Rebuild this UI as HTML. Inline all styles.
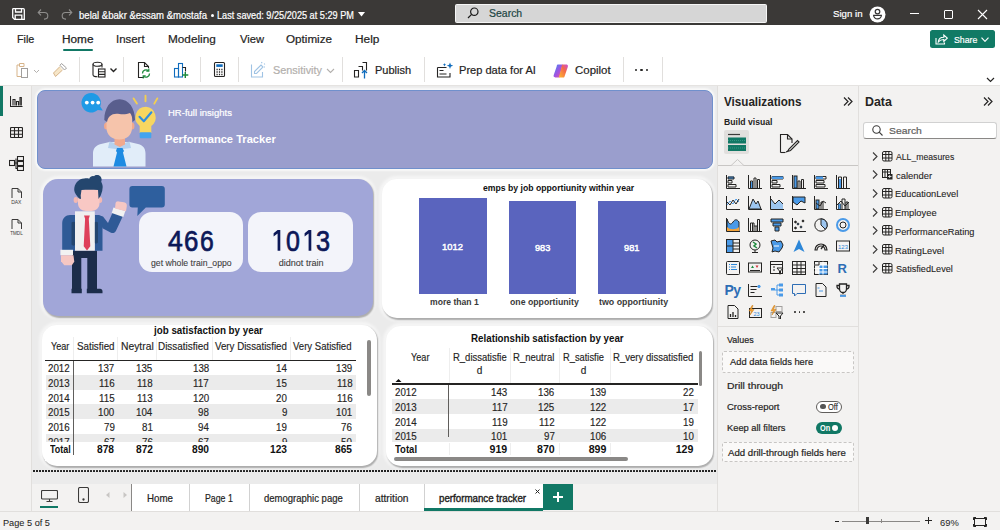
<!DOCTYPE html>
<html><head><meta charset="utf-8"><style>
*{box-sizing:border-box;margin:0;padding:0}
html,body{width:1000px;height:530px;overflow:hidden;background:#f3f2f1;font-family:"Liberation Sans",sans-serif;color:#252423;position:relative}
.abs{position:absolute}
svg{display:block;position:absolute}
.sep{position:absolute;top:57px;width:1px;height:25px;background:#e1dfdd}
</style></head><body>
<div class="abs" style="left:0;top:0;width:1000px;height:26px;background:#3b3937;border-bottom:1.2px solid #222"></div>
<svg style="left:12px;top:8px" width="13" height="12" viewBox="0 0 13 12" fill="none" stroke="#fff" stroke-width="1.3"><path d="M1 .7h10.3a1 1 0 0 1 1 1v9.6H2.5L.7 9.5V1.7a1 1 0 0 1 .3-1z"/><path d="M3.5 .7v3.3h6V.7M3.2 11.3V7.2h6.6v4.1"/></svg>
<svg style="left:37px;top:8px" width="12" height="12" viewBox="0 0 12 12" fill="none" stroke="#8f8e8c" stroke-width="1.1"><path d="M1.5 4.5h6a3.3 3.3 0 0 1 0 6.6H7"/><path d="M4 1.5L1.2 4.5 4 7.3"/></svg>
<svg style="left:61px;top:8px" width="12" height="12" viewBox="0 0 12 12" fill="none" stroke="#8f8e8c" stroke-width="1.1"><path d="M10.5 4.5h-6a3.3 3.3 0 0 0 0 6.6H5"/><path d="M8 1.5l2.8 3L8 7.3"/></svg>
<div class="abs" style="left:79.38px;top:10.79px;font-size:10.06px;line-height:10.06px;color:#fff;white-space:nowrap;transform:scaleX(0.9512);transform-origin:0 0;-webkit-text-stroke:0.20px #fff;">belal &amp;bakr &amp;essam &amp;mostafa</div>
<div class="abs" style="left:211px;top:14px;width:3px;height:3px;border-radius:50%;background:#fff"></div>
<div class="abs" style="left:216.77px;top:10.79px;font-size:10.06px;line-height:10.06px;color:#fff;white-space:nowrap;transform:scaleX(0.9111);transform-origin:0 0;-webkit-text-stroke:0.20px #fff;">Last saved: 9/25/2025 at 5:29 PM</div>
<svg style="left:358px;top:12px" width="7" height="5" viewBox="0 0 7 5"><path d="M0 0h7L3.5 4.5z" fill="#fff"/></svg>
<div class="abs" style="left:455px;top:3.7px;width:312px;height:19.5px;background:#d6d6d6;border:1px solid #f6f6f6;border-radius:1.5px"></div>
<svg style="left:467px;top:7px" width="12" height="12" viewBox="0 0 12 12" fill="none" stroke="#1b1b1b" stroke-width="1.2"><circle cx="7.3" cy="4.7" r="3.7"/><path d="M4.6 7.4L1 11"/></svg>
<div class="abs" style="left:489.03px;top:8.93px;font-size:10.47px;line-height:10.47px;color:#214544;white-space:nowrap;-webkit-text-stroke:0.20px #214544;">Search</div>
<div class="abs" style="left:833.06px;top:9.02px;font-size:9.78px;line-height:9.78px;color:#fff;white-space:nowrap;transform:scaleX(0.9899);transform-origin:0 0;-webkit-text-stroke:0.20px #fff;">Sign in</div>
<svg style="left:869px;top:5.5px" width="17" height="17" viewBox="0 0 17 17"><circle cx="8.5" cy="8.5" r="8" fill="#fff"/><circle cx="8.5" cy="5.6" r="2.3" fill="none" stroke="#343332" stroke-width="1.2"/><path d="M4.6 9.3h7.8a3.9 3.6 0 0 1-7.8 0z" fill="none" stroke="#343332" stroke-width="1.2"/></svg>
<div class="abs" style="left:910px;top:13px;width:9px;height:1.2px;background:#fff"></div>
<div class="abs" style="left:944px;top:10px;width:8.5px;height:8.5px;border:1.2px solid #fff;border-radius:1px"></div>
<svg style="left:977px;top:9px" width="11" height="11" viewBox="0 0 11 11" stroke="#fff" stroke-width="1.1"><path d="M1 1l9 9M10 1l-9 9"/></svg>
<div class="abs" style="left:0;top:25px;width:1000px;height:61px;background:#fff;border-bottom:1px solid #e5e3e1"></div>
<div class="abs" style="left:17.14px;top:34.31px;font-size:10.61px;line-height:10.61px;color:#252423;white-space:nowrap;transform:scaleX(1.0151);transform-origin:0 0;-webkit-text-stroke:0.20px #252423;">File</div>
<div class="abs" style="left:62.06px;top:34.31px;font-size:10.61px;line-height:10.61px;color:#252423;white-space:nowrap;transform:scaleX(1.1127);transform-origin:0 0;-webkit-text-stroke:0.25px #252423;">Home</div>
<div class="abs" style="left:115.97px;top:34.31px;font-size:10.61px;line-height:10.61px;color:#252423;white-space:nowrap;transform:scaleX(1.0773);transform-origin:0 0;-webkit-text-stroke:0.20px #252423;">Insert</div>
<div class="abs" style="left:168.06px;top:34.31px;font-size:10.61px;line-height:10.61px;color:#252423;white-space:nowrap;transform:scaleX(1.1084);transform-origin:0 0;-webkit-text-stroke:0.20px #252423;">Modeling</div>
<div class="abs" style="left:239.94px;top:34.31px;font-size:10.61px;line-height:10.61px;color:#252423;white-space:nowrap;transform:scaleX(1.0541);transform-origin:0 0;-webkit-text-stroke:0.20px #252423;">View</div>
<div class="abs" style="left:286.47px;top:34.31px;font-size:10.61px;line-height:10.61px;color:#252423;white-space:nowrap;transform:scaleX(1.0997);transform-origin:0 0;-webkit-text-stroke:0.20px #252423;">Optimize</div>
<div class="abs" style="left:355.05px;top:34.31px;font-size:10.61px;line-height:10.61px;color:#252423;white-space:nowrap;transform:scaleX(1.1198);transform-origin:0 0;-webkit-text-stroke:0.20px #252423;">Help</div>
<div class="abs" style="left:63px;top:48.5px;width:30px;height:2px;background:#117865;border-radius:1px"></div>
<div class="abs" style="left:930px;top:30px;width:65px;height:18px;background:#117a65;border-radius:2.5px"></div>
<svg style="left:934.5px;top:32.5px" width="13" height="12" viewBox="0 0 13 12" fill="none" stroke="#fff" stroke-width="1.1"><path d="M1 5v6h8.5V9.5"/><path d="M3.3 9c.2-3 2.5-4.8 5.5-4.8V2l3.5 3.2-3.5 3.2V6.5C6 6.5 4.5 7.5 3.3 9z"/></svg>
<div class="abs" style="left:954.21px;top:35.14px;font-size:9.64px;line-height:9.64px;color:#fff;white-space:nowrap;transform:scaleX(0.9067);transform-origin:0 0;-webkit-text-stroke:0.2px #fff;">Share</div>
<svg style="left:981px;top:36.5px" width="8" height="5.5" viewBox="0 0 8 5.5" fill="none" stroke="#fff" stroke-width="1.2"><path d="M.5 .7l3.5 3.6L7.5 .7"/></svg>
<div class="sep" style="left:79px"></div>
<div class="sep" style="left:123px"></div>
<div class="sep" style="left:162px"></div>
<div class="sep" style="left:200px"></div>
<div class="sep" style="left:238px"></div>
<div class="sep" style="left:342px"></div>
<div class="sep" style="left:424px"></div>
<div class="sep" style="left:623px"></div>
<div class="sep" style="left:662px"></div>
<svg style="left:15px;top:62px" width="26" height="17" viewBox="0 0 26 17" fill="none" stroke-width="1"><path d="M4.5 3H2v11.5h4" stroke="#d7b48a"/><path d="M4.5 1.5h4.5v3H4.5z" stroke="#d7b48a"/><rect x="6.5" y="6.5" width="6" height="9" stroke="#a19f9d"/><path d="M19 8l2.5 2.5L24 8" stroke="#b3b0ad"/></svg>
<svg style="left:52px;top:62px" width="16" height="16" viewBox="0 0 16 16" fill="none" stroke-width="1"><path d="M9.5 1.5l5 4.5-2 2-4.5-4.7z" stroke="#a19f9d"/><path d="M8 4.5L1.5 11l2 3.5L10.5 8" stroke="#d7b48a" fill="#f6e6c8"/></svg>
<svg style="left:91px;top:61px" width="28" height="18" viewBox="0 0 28 18" fill="none" stroke="#252423" stroke-width="1.1"><ellipse cx="6.5" cy="3.3" rx="4.5" ry="2"/><path d="M2 3.3v10.5c0 1.1 2 2 4.5 2M11 3.3v3.2"/><rect x="7.5" y="8" width="6.5" height="8"/><path d="M7.5 10.8h6.5M7.5 13.4h6.5"/><path d="M19.5 7.5l3 3 3-3" stroke-width="1.4"/></svg>
<svg style="left:136px;top:61px" width="16" height="18" viewBox="0 0 16 18" fill="none" stroke-width="1.1"><path d="M8 16.5H2.5v-15h6l4 4V7" stroke="#252423"/><path d="M8.5 1.5v4h4" stroke="#252423"/><path d="M6.5 12.5a3.5 3.5 0 0 1 6-2.6M13.5 12.5a3.5 3.5 0 0 1-6 2.6" stroke="#1c8a3c" stroke-width="1.3"/><path d="M12.8 7.6v2.5h-2.5M7.2 17.4v-2.5h2.5" stroke="#1c8a3c" stroke-width="1.2"/></svg>
<svg style="left:173px;top:61px" width="17" height="18" viewBox="0 0 17 18" fill="none" stroke-width="1.1"><rect x="1.5" y="7.5" width="4" height="8.5" stroke="#0f6cbd"/><rect x="5.5" y="2.5" width="4" height="13.5" stroke="#0f6cbd"/><path d="M9.5 6.5h3v4" stroke="#252423"/><path d="M12.3 11v6M9.3 14h6" stroke="#1c8a3c" stroke-width="1.4"/></svg>
<svg style="left:213px;top:61px" width="13" height="17" viewBox="0 0 13 17" fill="none" stroke="#252423" stroke-width="1.1"><rect x="1.5" y="1.5" width="10" height="14" rx="1"/><rect x="3.3" y="3.3" width="6.4" height="2.6" fill="#0f6cbd" stroke="none"/><path d="M3.5 8.5h1.2M5.9 8.5h1.2M8.3 8.5h1.2M3.5 11h1.2M5.9 11h1.2M8.3 11h1.2M3.5 13.5h1.2M5.9 13.5h1.2M8.3 13.5h1.2" stroke-width="1.4"/></svg>
<svg style="left:250px;top:61px" width="16" height="18" viewBox="0 0 16 18" fill="none" stroke="#9fc3e4" stroke-width="1.1"><path d="M1.5 3.5v12.5h11v-5"/><path d="M4.5 10.5l6.5-6.5 2 2-6.5 6.5h-2z"/><path d="M11.5 1l.5 1.2M14.2 2.5l.6 1M15 6h-1"/></svg>
<div class="abs" style="left:272.51px;top:64.91px;font-size:10.61px;line-height:10.61px;color:#b3b0ad;white-space:nowrap;transform:scaleX(1.0256);transform-origin:0 0;-webkit-text-stroke:0.20px #b3b0ad;">Sensitivity</div>
<svg style="left:326px;top:68px" width="9" height="6" viewBox="0 0 9 6" fill="none" stroke="#b3b0ad" stroke-width="1.1"><path d="M1 1l3.5 3.5L8 1"/></svg>
<svg style="left:353px;top:61px" width="17" height="18" viewBox="0 0 17 18" fill="none" stroke-width="1.1"><path d="M1.5 9.5h4v6.5h-4zM5.5 5.5h4v4M9.5 1.5h4v8" stroke="#252423"/><path d="M11.5 17.5V9.5M9 12l2.5-2.5L14 12" stroke="#0f6cbd" stroke-width="1.3"/></svg>
<div class="abs" style="left:375.12px;top:64.91px;font-size:10.61px;line-height:10.61px;color:#252423;white-space:nowrap;transform:scaleX(1.0368);transform-origin:0 0;-webkit-text-stroke:0.20px #252423;">Publish</div>
<svg style="left:436px;top:62px" width="18" height="17" viewBox="0 0 18 17" fill="none" stroke-width="1.1"><path d="M1.5 5.5h9M1.5 5.5v9.5h12.5v-4" stroke="#252423"/><path d="M3.5 8.5h4M3.5 12h7" stroke="#252423"/><path d="M14 .5l.9 2.3 2.3.9-2.3.9L14 7l-.9-2.4-2.3-.9 2.3-.9z" fill="#0f6cbd"/><path d="M8.5 1l.5 1.2 1.2.5-1.2.5-.5 1.2-.5-1.2-1.2-.5 1.2-.5z" fill="#0f6cbd"/></svg>
<div class="abs" style="left:458.61px;top:65.11px;font-size:10.61px;line-height:10.61px;color:#252423;white-space:nowrap;transform:scaleX(1.0429);transform-origin:0 0;-webkit-text-stroke:0.20px #252423;">Prep data for AI</div>
<svg style="left:552.5px;top:63.5px" width="15.5" height="14" viewBox="0 0 17 15"><defs><linearGradient id="cg1" x1="0" y1="0" x2="1" y2="1"><stop offset="0" stop-color="#3c8cf5"/><stop offset=".55" stop-color="#a452e0"/><stop offset="1" stop-color="#f45b8a"/></linearGradient><linearGradient id="cg2" x1="0" y1="1" x2="1" y2="0"><stop offset="0" stop-color="#ffb92e"/><stop offset=".6" stop-color="#f3684b"/><stop offset="1" stop-color="#c94edb"/></linearGradient></defs><path d="M5 .5h5.5L7 14.5H2.5C1 14.5.3 13.5.8 12L4 2.5c.3-1.2.6-2 1-2z" fill="url(#cg1)"/><path d="M12 14.5H6.5L10 .5h4.5c1.5 0 2.2 1 1.7 2.5L13 12.5c-.3 1.2-.6 2-1 2z" fill="url(#cg2)"/></svg>
<div class="abs" style="left:574.93px;top:65.11px;font-size:10.61px;line-height:10.61px;color:#252423;white-space:nowrap;transform:scaleX(1.0793);transform-origin:0 0;-webkit-text-stroke:0.20px #252423;">Copilot</div>
<div class="abs" style="left:634.5px;top:69px;width:2.4px;height:2.4px;border-radius:50%;background:#252423"></div>
<div class="abs" style="left:640.3px;top:69px;width:2.4px;height:2.4px;border-radius:50%;background:#252423"></div>
<div class="abs" style="left:646.1px;top:69px;width:2.4px;height:2.4px;border-radius:50%;background:#252423"></div>
<svg style="left:986px;top:77px" width="9" height="6" viewBox="0 0 9 6" fill="none" stroke="#252423" stroke-width="1.2"><path d="M1 1l3.5 3.5L8 1"/></svg>
<div class="abs" style="left:0;top:86px;width:32px;height:425px;background:#f3f2f1;border-right:1px solid #e1dfdd"></div>
<div class="abs" style="left:32px;top:86px;width:685px;height:398px;background:#ebebeb"></div>
<div class="abs" style="left:717px;top:86px;width:142px;height:425px;background:#f3f2f1;border-left:1px solid #e1dfdd;border-right:1px solid #e1dfdd"></div>
<div class="abs" style="left:859px;top:86px;width:141px;height:425px;background:#f3f2f1"></div>
<div class="abs" style="left:0;top:511px;width:1000px;height:19px;background:#f3f2f1;border-top:1px solid #e1dfdd"></div>
<div class="abs" style="left:33px;top:470.3px;width:684px;height:1.8px;background:repeating-linear-gradient(90deg,#222 0 1.6px,transparent 1.6px 3px)"></div>
<div class="abs" style="left:37px;top:90px;width:675.5px;height:79px;background:#9a9ecd;border:1.5px solid #7090cc;border-radius:8px;box-shadow:0 0 2px 2px rgba(255,255,255,0.7)"></div>
<svg style="left:80px;top:90px" width="80" height="80" viewBox="80 90 80 80">
<path d="M91.3 93a9.8 9.8 0 1 0 6.5 17.1l5 .5-2.6-4.2A9.8 9.8 0 0 0 91.3 93z" fill="#1f9ae6"/>
<circle cx="86.8" cy="102.6" r="1.9" fill="#fff"/><circle cx="92.6" cy="102.6" r="1.9" fill="#fff"/><circle cx="98.2" cy="102.6" r="1.9" fill="#fff"/>
<path d="M93 166.5v-13c0-5 3-8.5 8-9.5l8.5-2h20l8.5 2c5 1 7.5 4.5 7.5 9.5v13z" fill="#e1edf9"/>
<path d="M109.5 141.5l10 3 10-3 1.5 6.5-11.5 1.5-11.5-1.5z" fill="#b5d1ee"/>
<path d="M114.5 137h10.5v7.5l-5.2 2.5-5.3-2.5z" fill="#f1a98d"/>
<path d="M117 148h5.5l1.5 3-1 1.5 3.5 14h-13l3.5-14-1-1.5z" fill="#1e8be2"/>
<ellipse cx="106.5" cy="126" rx="2.5" ry="3.5" fill="#f1a98d"/><ellipse cx="132" cy="126" rx="2.5" ry="3.5" fill="#f1a98d"/>
<path d="M106.5 114c0-3 3-4 13-4s12.5 1 12.5 4v14c0 7-5.5 11.5-12.7 11.5S106.5 135 106.5 128z" fill="#f6c4ab"/>
<path d="M104.3 120c0-12 6-20.7 15.2-20.7s15.5 8.7 15.5 20.7l-2.5 2c0-4-1-7.5-2.5-9-3 1.5-8 1.5-10.5 1-3.5-.5-7-.5-10 2.5-1.5 1.5-2 3.5-2.5 5.5z" fill="#595e8d"/>
<path d="M133.6 98.4l3.3 5.2M145.5 95.8v5.5M157.3 98.4l-3 5.2" stroke="#f3cf4f" stroke-width="1.9" stroke-linecap="round"/>
<path d="M146 106.8a10.6 10.6 0 0 0-6.3 19.1v7h11.6v-7A10.6 10.6 0 0 0 146 106.8z" fill="#f7d660"/>
<rect x="139.7" y="132.3" width="11.6" height="6" rx="1" fill="#44a4ee"/>
<path d="M139.5 116.8l4.3 4.5 7.6-9" fill="none" stroke="#2f8ee0" stroke-width="2.1" stroke-linecap="round" stroke-linejoin="round"/>
</svg>
<div class="abs" style="left:168.24px;top:108.70px;font-size:9.22px;line-height:9.22px;color:#fff;white-space:nowrap;transform:scaleX(1.0307);transform-origin:0 0;-webkit-text-stroke:0.20px #fff;">HR-full insights</div>
<div class="abs" style="left:165.08px;top:133.37px;font-size:11.73px;line-height:11.73px;font-weight:bold;color:#fff;white-space:nowrap;transform:scaleX(0.9500);transform-origin:0 0;">Performance Tracker</div>
<div class="abs" style="left:43px;top:179px;width:330px;height:137px;background:#a1a6d8;border-radius:15px;box-shadow:1px 1.5px 1.5px rgba(0,0,0,0.30),0 0 3px 3px rgba(255,255,255,0.55)"></div>
<svg style="left:55px;top:175px" width="115" height="125" viewBox="55 175 115 125">
<path d="M129.4 189a3 3 0 0 1 3-3h29.4a3 3 0 0 1 3 3v15.4a3 3 0 0 1-3 3h-16l-8.5 8.5.5-8.5h-5.4a3 3 0 0 1-3-3z" fill="#2e5f9e"/>
<path d="M72 250.5h25v39H87.3V258h-6v31.5H72z" fill="#1c2d4a"/>
<path d="M71.5 288.8h10.3v4.4H71.5zM86.8 288.8h13.2c1.5 0 2.5 1 2.5 2.5v1.9H86.8z" fill="#1c2d4a"/>
<path d="M98 215l5 1.5 5 6.5 5.5-12.5 10 4.2-7.5 16c-1 2-3 2.8-5 2l-8.5-4.5z" fill="#2f5a96"/>
<path d="M62.2 223c0-4.5 3.5-8 8-8H75v35.7H62.2z" fill="#2f5a96"/>
<path d="M94.8 215h3c2.5 0 4.7 2.2 4.7 5v30.7h-7.7z" fill="#2f5a96"/>
<path d="M71.5 222.5c1.5-1 3-1 4 0v22c-1 1.5-3 1.5-4 0zM94 222.5c1.3-1 2.8-1 4 0v20c-1.2 1.5-2.8 1.5-4 0z" fill="#24466f"/>
<path d="M75 211.3h19.8v39.4H75z" fill="#f0f0f0"/>
<path d="M84 215.5h5.8l-1 3.3 1.5 27.5-3.3 4.2-3.3-4.2 1.4-27.5z" fill="#de405a"/>
<rect x="60.4" y="249.8" width="12.6" height="5.4" fill="#f2f2f2"/>
<path d="M61 255.2h12.5l.8 6.5-2.5 3.5h-7.5l-3.3-4z" fill="#f6c7c3"/>
<path d="M113.5 207.5l11.8 3.6-2 5.8-11.6-3.8z" fill="#f2f2f2"/>
<path d="M115 208.5l.5-5c.2-1.5 1.5-2.3 3-2.1l5.5.8c2 .3 3.2 2 2.8 4l-.8 5z" fill="#f6c7c3"/>
<ellipse cx="75.8" cy="200" rx="2.2" ry="3" fill="#f3b8b2"/><ellipse cx="100" cy="200" rx="2.2" ry="3" fill="#f3b8b2"/>
<path d="M78 189h21.5v14.5c0 4.5-4 7.5-8 7.5h-5.5c-4.5 0-8-3-8-7.5z" fill="#f8c8c4"/>
<path d="M74.2 190c0-6.5 4-11 10-11.5 2-.3 3.5-.3 5 .2.8-2 2.8-3 4.8-2.5 1.2-1.5 3.5-1.8 5.2-.8 2.3 1.3 3 4 2 6.3.8 1.5 1.5 3.2 1.5 5.3l-.5 4-1.5 4.5-2.2 3.5-.5-9c-5.5-.5-12-.5-16.5 0l-.8 5.5.3 3.5-2-.5c-2.5-3-4.5-5.5-4.8-8.5z" fill="#24466e"/>
</svg>
<div class="abs" style="left:138.5px;top:212px;width:104.5px;height:60px;background:#f3f4fa;border-radius:13px"></div>
<div class="abs" style="left:248px;top:212px;width:104.5px;height:60px;background:#f3f4fa;border-radius:13px"></div>
<div class="abs" style="left:168.47px;top:226.63px;font-size:28.91px;line-height:28.91px;color:#0c1858;white-space:nowrap;transform:scaleX(0.9178);transform-origin:0 0;-webkit-text-stroke:0.70px #0c1858;">4</div>
<div class="abs" style="left:183.91px;top:226.63px;font-size:28.91px;line-height:28.91px;color:#0c1858;white-space:nowrap;transform:scaleX(0.8926);transform-origin:0 0;-webkit-text-stroke:0.70px #0c1858;">6</div>
<div class="abs" style="left:199.76px;top:226.63px;font-size:28.91px;line-height:28.91px;color:#0c1858;white-space:nowrap;transform:scaleX(0.8554);transform-origin:0 0;-webkit-text-stroke:0.70px #0c1858;">6</div>
<svg style="left:273.0px;top:230px" width="8" height="21" viewBox="0 0 8 21"><path d="M4.6 .1h2.7v20.7H4.6V3.4L.6 6.4V3.3z" fill="#0c1858"/></svg>
<div class="abs" style="left:285.90px;top:226.63px;font-size:28.91px;line-height:28.91px;color:#0c1858;white-space:nowrap;transform:scaleX(0.8647);transform-origin:0 0;-webkit-text-stroke:0.70px #0c1858;">0</div>
<svg style="left:303.6px;top:230px" width="8" height="21" viewBox="0 0 8 21"><path d="M4.6 .1h2.7v20.7H4.6V3.4L.6 6.4V3.3z" fill="#0c1858"/></svg>
<div class="abs" style="left:316.49px;top:226.63px;font-size:28.91px;line-height:28.91px;color:#0c1858;white-space:nowrap;transform:scaleX(0.8738);transform-origin:0 0;-webkit-text-stroke:0.70px #0c1858;">3</div>
<div class="abs" style="left:150.65px;top:258.92px;font-size:9.08px;line-height:9.08px;color:#404040;white-space:nowrap;transform:scaleX(0.9573);transform-origin:0 0;-webkit-text-stroke:0.10px #404040;">get whole train_oppo</div>
<div class="abs" style="left:278.64px;top:258.92px;font-size:9.08px;line-height:9.08px;color:#404040;white-space:nowrap;-webkit-text-stroke:0.10px #404040;">didnot train</div>
<div class="abs" style="left:382px;top:179px;width:330px;height:139px;background:#ffffff;border-radius:15px;box-shadow:1px 1.5px 1.5px rgba(0,0,0,0.30),0 0 3px 3px rgba(255,255,255,0.55)"></div>
<div class="abs" style="left:483.45px;top:183.70px;font-size:9.22px;line-height:9.22px;font-weight:bold;color:#111;white-space:nowrap;transform:scaleX(0.9401);transform-origin:0 0;">emps by job opportiunity within year</div>
<div class="abs" style="left:418.8px;top:198.0px;width:67.9px;height:95.6px;background:#5a64be"></div>
<div class="abs" style="left:442.20px;top:241.56px;font-size:9.50px;line-height:9.50px;color:#fff;white-space:nowrap;transform:scaleX(0.9872);transform-origin:0 0;-webkit-text-stroke:0.45px #fff;">1012</div>
<div class="abs" style="left:430.14px;top:297.26px;font-size:9.50px;line-height:9.50px;font-weight:bold;color:#3a3a3a;white-space:nowrap;transform:scaleX(0.9066);transform-origin:0 0;">more than 1</div>
<div class="abs" style="left:508.6px;top:201.2px;width:67.7px;height:92.4px;background:#5a64be"></div>
<div class="abs" style="left:534.78px;top:243.16px;font-size:9.50px;line-height:9.50px;color:#fff;white-space:nowrap;transform:scaleX(0.9675);transform-origin:0 0;-webkit-text-stroke:0.45px #fff;">983</div>
<div class="abs" style="left:509.65px;top:297.26px;font-size:9.50px;line-height:9.50px;font-weight:bold;color:#3a3a3a;white-space:nowrap;transform:scaleX(0.9173);transform-origin:0 0;">one opportiunity</div>
<div class="abs" style="left:598.0px;top:201.2px;width:67.7px;height:92.4px;background:#5a64be"></div>
<div class="abs" style="left:624.18px;top:243.16px;font-size:9.50px;line-height:9.50px;color:#fff;white-space:nowrap;transform:scaleX(0.9705);transform-origin:0 0;-webkit-text-stroke:0.45px #fff;">981</div>
<div class="abs" style="left:599.31px;top:297.26px;font-size:9.50px;line-height:9.50px;font-weight:bold;color:#3a3a3a;white-space:nowrap;transform:scaleX(0.9297);transform-origin:0 0;">two opportiunity</div>
<div class="abs" style="left:42.3px;top:325.2px;width:335px;height:140.5px;background:#ffffff;border-radius:15px;box-shadow:1px 1.5px 1.5px rgba(0,0,0,0.30),0 0 3px 3px rgba(255,255,255,0.55)"></div>
<div class="abs" style="left:154.15px;top:325.63px;font-size:10.47px;line-height:10.47px;font-weight:bold;color:#111;white-space:nowrap;transform:scaleX(0.9362);transform-origin:0 0;">job satisfaction by year</div>
<div class="abs" style="left:45.5px;top:374.9px;width:310px;height:14.8px;background:#ebebeb"></div>
<div class="abs" style="left:45.5px;top:404.3px;width:310px;height:14.8px;background:#ebebeb"></div>
<div class="abs" style="left:45.5px;top:433.7px;width:310px;height:14.8px;background:#ebebeb"></div>
<div class="abs" style="left:73.3px;top:337px;width:1px;height:23px;background:#eeeeee"></div>
<div class="abs" style="left:117.2px;top:337px;width:1px;height:23px;background:#eeeeee"></div>
<div class="abs" style="left:155.5px;top:337px;width:1px;height:23px;background:#eeeeee"></div>
<div class="abs" style="left:212.0px;top:337px;width:1px;height:23px;background:#eeeeee"></div>
<div class="abs" style="left:289.5px;top:337px;width:1px;height:23px;background:#eeeeee"></div>
<div class="abs" style="left:50.77px;top:342.09px;font-size:10.06px;line-height:10.06px;color:#252423;white-space:nowrap;transform:scaleX(0.9040);transform-origin:0 0;-webkit-text-stroke:0.15px #252423;">Year</div>
<div class="abs" style="left:77.06px;top:342.09px;font-size:10.06px;line-height:10.06px;color:#252423;white-space:nowrap;transform:scaleX(0.9744);transform-origin:0 0;-webkit-text-stroke:0.15px #252423;">Satisfied</div>
<div class="abs" style="left:120.57px;top:342.09px;font-size:10.06px;line-height:10.06px;color:#252423;white-space:nowrap;transform:scaleX(1.0274);transform-origin:0 0;-webkit-text-stroke:0.15px #252423;">Neytral</div>
<div class="abs" style="left:158.41px;top:342.09px;font-size:10.06px;line-height:10.06px;color:#252423;white-space:nowrap;transform:scaleX(0.9874);transform-origin:0 0;-webkit-text-stroke:0.15px #252423;">Dissatisfied</div>
<div class="abs" style="left:215.15px;top:342.09px;font-size:10.06px;line-height:10.06px;color:#252423;white-space:nowrap;transform:scaleX(0.9686);transform-origin:0 0;-webkit-text-stroke:0.15px #252423;">Very Dissatisfied</div>
<div class="abs" style="left:293.25px;top:342.09px;font-size:10.06px;line-height:10.06px;color:#252423;white-space:nowrap;transform:scaleX(0.9525);transform-origin:0 0;-webkit-text-stroke:0.15px #252423;">Very Satisfied</div>
<div class="abs" style="left:48.41px;top:363.21px;font-size:10.61px;line-height:10.61px;color:#252423;white-space:nowrap;transform:scaleX(0.9200);transform-origin:0 0;-webkit-text-stroke:0.15px #252423;">2012</div>
<div class="abs" style="left:98.23px;top:363.21px;font-size:10.61px;line-height:10.61px;color:#252423;white-space:nowrap;transform:scaleX(0.9200);transform-origin:0 0;-webkit-text-stroke:0.15px #252423;">137</div>
<div class="abs" style="left:136.43px;top:363.21px;font-size:10.61px;line-height:10.61px;color:#252423;white-space:nowrap;transform:scaleX(0.9200);transform-origin:0 0;-webkit-text-stroke:0.15px #252423;">135</div>
<div class="abs" style="left:192.63px;top:363.21px;font-size:10.61px;line-height:10.61px;color:#252423;white-space:nowrap;transform:scaleX(0.9200);transform-origin:0 0;-webkit-text-stroke:0.15px #252423;">138</div>
<div class="abs" style="left:275.95px;top:363.21px;font-size:10.61px;line-height:10.61px;color:#252423;white-space:nowrap;transform:scaleX(0.9200);transform-origin:0 0;-webkit-text-stroke:0.15px #252423;">14</div>
<div class="abs" style="left:335.98px;top:363.21px;font-size:10.61px;line-height:10.61px;color:#252423;white-space:nowrap;transform:scaleX(0.9200);transform-origin:0 0;-webkit-text-stroke:0.15px #252423;">139</div>
<div class="abs" style="left:48.41px;top:377.91px;font-size:10.61px;line-height:10.61px;color:#252423;white-space:nowrap;transform:scaleX(0.9200);transform-origin:0 0;-webkit-text-stroke:0.15px #252423;">2013</div>
<div class="abs" style="left:98.81px;top:377.91px;font-size:10.61px;line-height:10.61px;color:#252423;white-space:nowrap;transform:scaleX(0.9200);transform-origin:0 0;-webkit-text-stroke:0.15px #252423;">116</div>
<div class="abs" style="left:137.11px;top:377.91px;font-size:10.61px;line-height:10.61px;color:#252423;white-space:nowrap;transform:scaleX(0.9200);transform-origin:0 0;-webkit-text-stroke:0.15px #252423;">118</div>
<div class="abs" style="left:193.41px;top:377.91px;font-size:10.61px;line-height:10.61px;color:#252423;white-space:nowrap;transform:scaleX(0.9200);transform-origin:0 0;-webkit-text-stroke:0.15px #252423;">117</div>
<div class="abs" style="left:276.05px;top:377.91px;font-size:10.61px;line-height:10.61px;color:#252423;white-space:nowrap;transform:scaleX(0.9200);transform-origin:0 0;-webkit-text-stroke:0.15px #252423;">15</div>
<div class="abs" style="left:336.61px;top:377.91px;font-size:10.61px;line-height:10.61px;color:#252423;white-space:nowrap;transform:scaleX(0.9200);transform-origin:0 0;-webkit-text-stroke:0.15px #252423;">118</div>
<div class="abs" style="left:48.41px;top:392.61px;font-size:10.61px;line-height:10.61px;color:#252423;white-space:nowrap;transform:scaleX(0.9200);transform-origin:0 0;-webkit-text-stroke:0.15px #252423;">2014</div>
<div class="abs" style="left:98.81px;top:392.61px;font-size:10.61px;line-height:10.61px;color:#252423;white-space:nowrap;transform:scaleX(0.9200);transform-origin:0 0;-webkit-text-stroke:0.15px #252423;">115</div>
<div class="abs" style="left:137.11px;top:392.61px;font-size:10.61px;line-height:10.61px;color:#252423;white-space:nowrap;transform:scaleX(0.9200);transform-origin:0 0;-webkit-text-stroke:0.15px #252423;">113</div>
<div class="abs" style="left:192.58px;top:392.61px;font-size:10.61px;line-height:10.61px;color:#252423;white-space:nowrap;transform:scaleX(0.9200);transform-origin:0 0;-webkit-text-stroke:0.15px #252423;">120</div>
<div class="abs" style="left:276.00px;top:392.61px;font-size:10.61px;line-height:10.61px;color:#252423;white-space:nowrap;transform:scaleX(0.9200);transform-origin:0 0;-webkit-text-stroke:0.15px #252423;">20</div>
<div class="abs" style="left:336.61px;top:392.61px;font-size:10.61px;line-height:10.61px;color:#252423;white-space:nowrap;transform:scaleX(0.9200);transform-origin:0 0;-webkit-text-stroke:0.15px #252423;">116</div>
<div class="abs" style="left:48.41px;top:407.31px;font-size:10.61px;line-height:10.61px;color:#252423;white-space:nowrap;transform:scaleX(0.9200);transform-origin:0 0;-webkit-text-stroke:0.15px #252423;">2015</div>
<div class="abs" style="left:98.08px;top:407.31px;font-size:10.61px;line-height:10.61px;color:#252423;white-space:nowrap;transform:scaleX(0.9200);transform-origin:0 0;-webkit-text-stroke:0.15px #252423;">100</div>
<div class="abs" style="left:136.33px;top:407.31px;font-size:10.61px;line-height:10.61px;color:#252423;white-space:nowrap;transform:scaleX(0.9200);transform-origin:0 0;-webkit-text-stroke:0.15px #252423;">104</div>
<div class="abs" style="left:198.05px;top:407.31px;font-size:10.61px;line-height:10.61px;color:#252423;white-space:nowrap;transform:scaleX(0.9200);transform-origin:0 0;-webkit-text-stroke:0.15px #252423;">98</div>
<div class="abs" style="left:281.52px;top:407.31px;font-size:10.61px;line-height:10.61px;color:#252423;white-space:nowrap;transform:scaleX(0.9200);transform-origin:0 0;-webkit-text-stroke:0.15px #252423;">9</div>
<div class="abs" style="left:335.98px;top:407.31px;font-size:10.61px;line-height:10.61px;color:#252423;white-space:nowrap;transform:scaleX(0.9200);transform-origin:0 0;-webkit-text-stroke:0.15px #252423;">101</div>
<div class="abs" style="left:48.41px;top:422.01px;font-size:10.61px;line-height:10.61px;color:#252423;white-space:nowrap;transform:scaleX(0.9200);transform-origin:0 0;-webkit-text-stroke:0.15px #252423;">2016</div>
<div class="abs" style="left:103.60px;top:422.01px;font-size:10.61px;line-height:10.61px;color:#252423;white-space:nowrap;transform:scaleX(0.9200);transform-origin:0 0;-webkit-text-stroke:0.15px #252423;">79</div>
<div class="abs" style="left:141.90px;top:422.01px;font-size:10.61px;line-height:10.61px;color:#252423;white-space:nowrap;transform:scaleX(0.9200);transform-origin:0 0;-webkit-text-stroke:0.15px #252423;">81</div>
<div class="abs" style="left:197.95px;top:422.01px;font-size:10.61px;line-height:10.61px;color:#252423;white-space:nowrap;transform:scaleX(0.9200);transform-origin:0 0;-webkit-text-stroke:0.15px #252423;">94</div>
<div class="abs" style="left:276.10px;top:422.01px;font-size:10.61px;line-height:10.61px;color:#252423;white-space:nowrap;transform:scaleX(0.9200);transform-origin:0 0;-webkit-text-stroke:0.15px #252423;">19</div>
<div class="abs" style="left:341.35px;top:422.01px;font-size:10.61px;line-height:10.61px;color:#252423;white-space:nowrap;transform:scaleX(0.9200);transform-origin:0 0;-webkit-text-stroke:0.15px #252423;">76</div>
<div class="abs" style="left:48.41px;top:436.71px;font-size:10.61px;line-height:10.61px;color:#252423;white-space:nowrap;transform:scaleX(0.9200);transform-origin:0 0;-webkit-text-stroke:0.15px #252423;">2017</div>
<div class="abs" style="left:103.65px;top:436.71px;font-size:10.61px;line-height:10.61px;color:#252423;white-space:nowrap;transform:scaleX(0.9200);transform-origin:0 0;-webkit-text-stroke:0.15px #252423;">67</div>
<div class="abs" style="left:141.85px;top:436.71px;font-size:10.61px;line-height:10.61px;color:#252423;white-space:nowrap;transform:scaleX(0.9200);transform-origin:0 0;-webkit-text-stroke:0.15px #252423;">76</div>
<div class="abs" style="left:198.15px;top:436.71px;font-size:10.61px;line-height:10.61px;color:#252423;white-space:nowrap;transform:scaleX(0.9200);transform-origin:0 0;-webkit-text-stroke:0.15px #252423;">67</div>
<div class="abs" style="left:281.52px;top:436.71px;font-size:10.61px;line-height:10.61px;color:#252423;white-space:nowrap;transform:scaleX(0.9200);transform-origin:0 0;-webkit-text-stroke:0.15px #252423;">9</div>
<div class="abs" style="left:341.30px;top:436.71px;font-size:10.61px;line-height:10.61px;color:#252423;white-space:nowrap;transform:scaleX(0.9200);transform-origin:0 0;-webkit-text-stroke:0.15px #252423;">50</div>
<div class="abs" style="left:45px;top:442px;width:321px;height:19px;background:#fff"></div>
<div class="abs" style="left:45px;top:359.8px;width:311px;height:1.6px;background:#252423"></div>
<div class="abs" style="left:72.8px;top:361px;width:1.3px;height:94px;background:#605e5c"></div>
<div class="abs" style="left:49.71px;top:444.01px;font-size:10.61px;line-height:10.61px;font-weight:bold;color:#111;white-space:nowrap;transform:scaleX(0.8430);transform-origin:0 0;">Total</div>
<div class="abs" style="left:97.34px;top:444.01px;font-size:10.61px;line-height:10.61px;font-weight:bold;color:#111;white-space:nowrap;transform:scaleX(0.9600);transform-origin:0 0;">878</div>
<div class="abs" style="left:135.74px;top:444.01px;font-size:10.61px;line-height:10.61px;font-weight:bold;color:#111;white-space:nowrap;transform:scaleX(0.9600);transform-origin:0 0;">872</div>
<div class="abs" style="left:191.94px;top:444.01px;font-size:10.61px;line-height:10.61px;font-weight:bold;color:#111;white-space:nowrap;transform:scaleX(0.9600);transform-origin:0 0;">890</div>
<div class="abs" style="left:269.89px;top:444.01px;font-size:10.61px;line-height:10.61px;font-weight:bold;color:#111;white-space:nowrap;transform:scaleX(0.9600);transform-origin:0 0;">123</div>
<div class="abs" style="left:335.09px;top:444.01px;font-size:10.61px;line-height:10.61px;font-weight:bold;color:#111;white-space:nowrap;transform:scaleX(0.9600);transform-origin:0 0;">865</div>
<div class="abs" style="left:367.4px;top:340px;width:3.6px;height:56px;background:#8a8886;border-radius:2px"></div>
<div class="abs" style="left:386.3px;top:325.5px;width:326.5px;height:140.5px;background:#ffffff;border-radius:15px;box-shadow:1px 1.5px 1.5px rgba(0,0,0,0.30),0 0 3px 3px rgba(255,255,255,0.55)"></div>
<div class="abs" style="left:471.16px;top:334.19px;font-size:10.06px;line-height:10.06px;font-weight:bold;color:#111;white-space:nowrap;transform:scaleX(0.9730);transform-origin:0 0;">Relationshib satisfaction by year</div>
<div class="abs" style="left:392px;top:399.4px;width:306px;height:14.4px;background:#ebebeb"></div>
<div class="abs" style="left:392px;top:428.9px;width:306px;height:14.4px;background:#ebebeb"></div>
<div class="abs" style="left:448.5px;top:348px;width:1px;height:35px;background:#eeeeee"></div>
<div class="abs" style="left:510.4px;top:348px;width:1px;height:35px;background:#eeeeee"></div>
<div class="abs" style="left:558.6px;top:348px;width:1px;height:35px;background:#eeeeee"></div>
<div class="abs" style="left:609.6px;top:348px;width:1px;height:35px;background:#eeeeee"></div>
<div class="abs" style="left:411.27px;top:352.99px;font-size:10.06px;line-height:10.06px;color:#252423;white-space:nowrap;transform:scaleX(0.9091);transform-origin:0 0;-webkit-text-stroke:0.15px #252423;">Year</div>
<div class="abs" style="left:452.94px;top:352.99px;font-size:10.06px;line-height:10.06px;color:#252423;white-space:nowrap;transform:scaleX(0.9433);transform-origin:0 0;-webkit-text-stroke:0.15px #252423;">R_dissatisfie</div>
<div class="abs" style="left:476.84px;top:365.99px;font-size:10.06px;line-height:10.06px;color:#252423;white-space:nowrap;-webkit-text-stroke:0.15px #252423;">d</div>
<div class="abs" style="left:513.24px;top:352.99px;font-size:10.06px;line-height:10.06px;color:#252423;white-space:nowrap;transform:scaleX(0.9494);transform-origin:0 0;-webkit-text-stroke:0.15px #252423;">R_neutral</div>
<div class="abs" style="left:562.95px;top:352.99px;font-size:10.06px;line-height:10.06px;color:#252423;white-space:nowrap;transform:scaleX(0.9280);transform-origin:0 0;-webkit-text-stroke:0.15px #252423;">R_satisfie</div>
<div class="abs" style="left:580.84px;top:365.99px;font-size:10.06px;line-height:10.06px;color:#252423;white-space:nowrap;-webkit-text-stroke:0.15px #252423;">d</div>
<div class="abs" style="left:613.23px;top:352.99px;font-size:10.06px;line-height:10.06px;color:#252423;white-space:nowrap;transform:scaleX(0.9528);transform-origin:0 0;-webkit-text-stroke:0.15px #252423;">R_very dissatisfied</div>
<svg style="left:395.4px;top:378.6px" width="7" height="3.5" viewBox="0 0 7 3.5"><path d="M0 3.5L3.5 0 7 3.5z" fill="#111"/></svg>
<div class="abs" style="left:392px;top:383.3px;width:306px;height:1.6px;background:#252423"></div>
<div class="abs" style="left:394.51px;top:387.21px;font-size:10.61px;line-height:10.61px;color:#252423;white-space:nowrap;transform:scaleX(0.9200);transform-origin:0 0;-webkit-text-stroke:0.15px #252423;">2012</div>
<div class="abs" style="left:490.93px;top:387.21px;font-size:10.61px;line-height:10.61px;color:#252423;white-space:nowrap;transform:scaleX(0.9200);transform-origin:0 0;-webkit-text-stroke:0.15px #252423;">143</div>
<div class="abs" style="left:538.43px;top:387.21px;font-size:10.61px;line-height:10.61px;color:#252423;white-space:nowrap;transform:scaleX(0.9200);transform-origin:0 0;-webkit-text-stroke:0.15px #252423;">136</div>
<div class="abs" style="left:590.18px;top:387.21px;font-size:10.61px;line-height:10.61px;color:#252423;white-space:nowrap;transform:scaleX(0.9200);transform-origin:0 0;-webkit-text-stroke:0.15px #252423;">139</div>
<div class="abs" style="left:682.65px;top:387.21px;font-size:10.61px;line-height:10.61px;color:#252423;white-space:nowrap;transform:scaleX(0.9200);transform-origin:0 0;-webkit-text-stroke:0.15px #252423;">22</div>
<div class="abs" style="left:394.51px;top:401.96px;font-size:10.61px;line-height:10.61px;color:#252423;white-space:nowrap;transform:scaleX(0.9200);transform-origin:0 0;-webkit-text-stroke:0.15px #252423;">2013</div>
<div class="abs" style="left:491.71px;top:401.96px;font-size:10.61px;line-height:10.61px;color:#252423;white-space:nowrap;transform:scaleX(0.9200);transform-origin:0 0;-webkit-text-stroke:0.15px #252423;">117</div>
<div class="abs" style="left:538.43px;top:401.96px;font-size:10.61px;line-height:10.61px;color:#252423;white-space:nowrap;transform:scaleX(0.9200);transform-origin:0 0;-webkit-text-stroke:0.15px #252423;">125</div>
<div class="abs" style="left:590.23px;top:401.96px;font-size:10.61px;line-height:10.61px;color:#252423;white-space:nowrap;transform:scaleX(0.9200);transform-origin:0 0;-webkit-text-stroke:0.15px #252423;">122</div>
<div class="abs" style="left:682.65px;top:401.96px;font-size:10.61px;line-height:10.61px;color:#252423;white-space:nowrap;transform:scaleX(0.9200);transform-origin:0 0;-webkit-text-stroke:0.15px #252423;">17</div>
<div class="abs" style="left:394.51px;top:416.71px;font-size:10.61px;line-height:10.61px;color:#252423;white-space:nowrap;transform:scaleX(0.9200);transform-origin:0 0;-webkit-text-stroke:0.15px #252423;">2014</div>
<div class="abs" style="left:491.66px;top:416.71px;font-size:10.61px;line-height:10.61px;color:#252423;white-space:nowrap;transform:scaleX(0.9200);transform-origin:0 0;-webkit-text-stroke:0.15px #252423;">119</div>
<div class="abs" style="left:539.21px;top:416.71px;font-size:10.61px;line-height:10.61px;color:#252423;white-space:nowrap;transform:scaleX(0.9200);transform-origin:0 0;-webkit-text-stroke:0.15px #252423;">112</div>
<div class="abs" style="left:590.23px;top:416.71px;font-size:10.61px;line-height:10.61px;color:#252423;white-space:nowrap;transform:scaleX(0.9200);transform-origin:0 0;-webkit-text-stroke:0.15px #252423;">122</div>
<div class="abs" style="left:682.60px;top:416.71px;font-size:10.61px;line-height:10.61px;color:#252423;white-space:nowrap;transform:scaleX(0.9200);transform-origin:0 0;-webkit-text-stroke:0.15px #252423;">19</div>
<div class="abs" style="left:394.51px;top:431.46px;font-size:10.61px;line-height:10.61px;color:#252423;white-space:nowrap;transform:scaleX(0.9200);transform-origin:0 0;-webkit-text-stroke:0.15px #252423;">2015</div>
<div class="abs" style="left:490.98px;top:431.46px;font-size:10.61px;line-height:10.61px;color:#252423;white-space:nowrap;transform:scaleX(0.9200);transform-origin:0 0;-webkit-text-stroke:0.15px #252423;">101</div>
<div class="abs" style="left:543.95px;top:431.46px;font-size:10.61px;line-height:10.61px;color:#252423;white-space:nowrap;transform:scaleX(0.9200);transform-origin:0 0;-webkit-text-stroke:0.15px #252423;">97</div>
<div class="abs" style="left:590.13px;top:431.46px;font-size:10.61px;line-height:10.61px;color:#252423;white-space:nowrap;transform:scaleX(0.9200);transform-origin:0 0;-webkit-text-stroke:0.15px #252423;">106</div>
<div class="abs" style="left:682.50px;top:431.46px;font-size:10.61px;line-height:10.61px;color:#252423;white-space:nowrap;transform:scaleX(0.9200);transform-origin:0 0;-webkit-text-stroke:0.15px #252423;">10</div>
<div class="abs" style="left:392px;top:442px;width:306px;height:14px;background:#fff"></div>
<div class="abs" style="left:448px;top:385px;width:1.3px;height:52px;background:#605e5c"></div>
<div class="abs" style="left:448.5px;top:443px;width:1px;height:12px;background:#eeeeee"></div>
<div class="abs" style="left:510.4px;top:443px;width:1px;height:12px;background:#eeeeee"></div>
<div class="abs" style="left:558.6px;top:443px;width:1px;height:12px;background:#eeeeee"></div>
<div class="abs" style="left:609.6px;top:443px;width:1px;height:12px;background:#eeeeee"></div>
<div class="abs" style="left:395.30px;top:444.01px;font-size:10.61px;line-height:10.61px;font-weight:bold;color:#111;white-space:nowrap;transform:scaleX(0.8978);transform-origin:0 0;">Total</div>
<div class="abs" style="left:489.50px;top:444.01px;font-size:10.61px;line-height:10.61px;font-weight:bold;color:#111;white-space:nowrap;">919</div>
<div class="abs" style="left:537.05px;top:444.01px;font-size:10.61px;line-height:10.61px;font-weight:bold;color:#111;white-space:nowrap;">870</div>
<div class="abs" style="left:588.70px;top:444.01px;font-size:10.61px;line-height:10.61px;font-weight:bold;color:#111;white-space:nowrap;">899</div>
<div class="abs" style="left:675.70px;top:444.01px;font-size:10.61px;line-height:10.61px;font-weight:bold;color:#111;white-space:nowrap;">129</div>
<div class="abs" style="left:393.6px;top:457.3px;width:234px;height:3.5px;background:#8a8886;border-radius:2px"></div>
<div class="abs" style="left:698.7px;top:350.7px;width:3.3px;height:35.7px;background:#8a8886;border-radius:2px"></div>
<div class="abs" style="left:0;top:86px;width:2.5px;height:30px;background:#117865"></div>
<svg style="left:10px;top:96px" width="13" height="11" viewBox="0 0 13 11" fill="none" stroke="#252423" stroke-width="1.1"><path d="M.5 0v10.5H12.5"/><path d="M3 9.5V3.5h2v6M6.5 9.5V5.5h2v4M10 9.5V1.5h1.3v8"/></svg>
<svg style="left:10px;top:127px" width="13" height="11" viewBox="0 0 13 11" fill="none" stroke="#252423" stroke-width="1.1"><rect x=".5" y=".5" width="12" height="10" rx="1"/><path d="M.5 3.8h12M.5 7.2h12M4.5 .5v10M8.5 .5v10"/></svg>
<svg style="left:9px;top:155.5px" width="15" height="15" viewBox="0 0 15 15" fill="none" stroke="#252423" stroke-width="1.1"><rect x=".5" y="4.5" width="5" height="5"/><rect x="8.5" y=".5" width="6" height="4"/><rect x="8.5" y="5.5" width="6" height="4"/><rect x="8.5" y="10.5" width="6" height="4"/><path d="M5.5 7h3M7 2.5v10h1.5"/></svg>
<svg style="left:9px;top:187.5px" width="15" height="16" viewBox="0 0 15 16" fill="none" stroke="#3b3a39" stroke-width="1"><path d="M3 10V.5h6l3.5 3.5v6"/><path d="M9 .5V4h3.5"/><text x="7.3" y="15.5" font-size="5" font-family="Liberation Sans" text-anchor="middle" fill="#3b3a39" stroke="none">DAX</text></svg>
<svg style="left:9px;top:219px" width="15" height="16" viewBox="0 0 15 16" fill="none" stroke="#3b3a39" stroke-width="1"><path d="M3 10V.5h6l3.5 3.5v6"/><path d="M9 .5V4h3.5"/><text x="7.5" y="15.5" font-size="4.6" font-family="Liberation Sans" text-anchor="middle" fill="#3b3a39" stroke="none">TMDL</text></svg>
<div class="abs" style="left:724.34px;top:95.73px;font-size:12.01px;line-height:12.01px;font-weight:bold;color:#252423;white-space:nowrap;transform:scaleX(0.9706);transform-origin:0 0;">Visualizations</div>
<svg style="left:842.5px;top:97px" width="10" height="9" viewBox="0 0 10 9" fill="none" stroke="#252423" stroke-width="1.2"><path d="M1 .5l4 4-4 4M5 .5l4 4-4 4"/></svg>
<div class="abs" style="left:724.04px;top:117.02px;font-size:9.78px;line-height:9.78px;font-weight:bold;color:#252423;white-space:nowrap;transform:scaleX(0.8847);transform-origin:0 0;">Build visual</div>
<div class="abs" style="left:724px;top:130.4px;width:25px;height:24px;background:#e1dfdd;border-radius:2px"></div>
<svg style="left:726.5px;top:132.5px" width="20" height="20" viewBox="0 0 20 20"><path d="M1 1.5h12" stroke="#3b3a39" stroke-width="1.2"/><rect x="1" y="4.5" width="18" height="6" fill="#117865"/><rect x="1" y="12" width="18" height="6" fill="#117865"/><path d="M1 7.5h18M1 15h18" stroke="#3fa08a" stroke-width="0.8" stroke-dasharray="1 1"/></svg>
<svg style="left:778.5px;top:132.5px" width="21" height="21" viewBox="0 0 21 21" fill="none" stroke="#252423" stroke-width="1.1"><path d="M1.5 19.5V1.5h7l4.5 4.5v4"/><path d="M8.5 1.5V6H13"/><path d="M1.5 19.5h5"/><path d="M7 19c1.5-.5 2.5-1.5 3-3l8.5-8.5 1.5 1.5-8.5 8.5c-1.5.5-3 1-4.5 1.5z"/></svg>
<div class="abs" style="left:718px;top:164.6px;width:140px;height:1px;background:#c8c6c4"></div>
<svg style="left:731px;top:158.5px" width="13" height="7" viewBox="0 0 13 7"><path d="M0 6.6L6.5 .5 13 6.6" fill="#f3f2f1" stroke="#c8c6c4" stroke-width="1"/></svg>
<div class="abs" style="left:718px;top:325.5px;width:140px;height:1px;background:#e1dfdd"></div>
<div class="abs" style="left:727.46px;top:334.72px;font-size:9.78px;line-height:9.78px;color:#252423;white-space:nowrap;transform:scaleX(0.9152);transform-origin:0 0;-webkit-text-stroke:0.20px #252423;">Values</div>
<div class="abs" style="left:721.5px;top:350.5px;width:132.5px;height:22px;border:1px dashed #c8c6c4;border-radius:2px;background:#faf9f8"></div>
<div class="abs" style="left:730.00px;top:357.02px;font-size:9.78px;line-height:9.78px;color:#252423;white-space:nowrap;transform:scaleX(0.9570);transform-origin:0 0;-webkit-text-stroke:0.20px #252423;">Add data fields here</div>
<div class="abs" style="left:726.67px;top:381.32px;font-size:9.78px;line-height:9.78px;color:#252423;white-space:nowrap;transform:scaleX(1.0628);transform-origin:0 0;-webkit-text-stroke:0.20px #252423;">Drill through</div>
<div class="abs" style="left:727.03px;top:401.72px;font-size:9.78px;line-height:9.78px;color:#252423;white-space:nowrap;transform:scaleX(0.9671);transform-origin:0 0;-webkit-text-stroke:0.20px #252423;">Cross-report</div>
<div class="abs" style="left:816px;top:400.5px;width:25.5px;height:12.5px;border:1px solid #605e5c;border-radius:6.5px;background:#fff"></div>
<div class="abs" style="left:819.8px;top:403.6px;width:5.8px;height:5.8px;border-radius:50%;background:#555"></div>
<div class="abs" style="left:827.66px;top:402.57px;font-size:8.66px;line-height:8.66px;color:#252423;white-space:nowrap;transform:scaleX(0.8605);transform-origin:0 0;-webkit-text-stroke:0.10px #252423;">Off</div>
<div class="abs" style="left:726.75px;top:422.52px;font-size:9.78px;line-height:9.78px;color:#252423;white-space:nowrap;transform:scaleX(0.9540);transform-origin:0 0;-webkit-text-stroke:0.20px #252423;">Keep all filters</div>
<div class="abs" style="left:816px;top:421.5px;width:25.5px;height:12.5px;border-radius:6.5px;background:#117865"></div>
<div class="abs" style="left:832px;top:424.8px;width:6px;height:6px;border-radius:50%;background:#fff"></div>
<div class="abs" style="left:819.71px;top:424.47px;font-size:8.66px;line-height:8.66px;font-weight:bold;color:#fff;white-space:nowrap;transform:scaleX(0.8505);transform-origin:0 0;">On</div>
<div class="abs" style="left:721.5px;top:442px;width:132.5px;height:19.5px;border:1px dashed #c8c6c4;border-radius:2px;background:#faf9f8"></div>
<div class="abs" style="left:728.30px;top:447.62px;font-size:9.78px;line-height:9.78px;color:#252423;white-space:nowrap;transform:scaleX(0.9863);transform-origin:0 0;-webkit-text-stroke:0.20px #252423;">Add drill-through fields here</div>
<svg style="left:726.3px;top:175.0px" width="14" height="14" viewBox="0 0 14 14" fill="none" stroke="#252423" stroke-width="1"><path d="M.5 0v13.5H14"/><rect x="2" y="1.5" width="6" height="2.5" fill="#4a9ae8" stroke="none"/><path d="M2 2h6v2H2zM2 5.5h4v2.5H2zM2 9.5h8v2.5H2z"/></svg>
<svg style="left:748.4px;top:175.0px" width="14" height="14" viewBox="0 0 14 14" fill="none" stroke="#252423" stroke-width="1"><path d="M.5 0v13.5H14"/><path d="M2.5 13V6h2v7M6 13V3h2v10M9.5 13V4.5h2V13"/><rect x="3" y="7" width="1.2" height="6" fill="#4a9ae8" stroke="none"/></svg>
<svg style="left:770.1px;top:175.0px" width="14" height="14" viewBox="0 0 14 14" fill="none" stroke="#252423" stroke-width="1"><path d="M.5 0v13.5H14"/><path d="M2 1.5h11v2.5H2zM2 5.5h5v2.5H2zM2 9.5h8v2.5H2z"/><rect x="2" y="1.5" width="11" height="2.5" fill="#4a9ae8" stroke="none"/></svg>
<svg style="left:792.2px;top:175.0px" width="14" height="14" viewBox="0 0 14 14" fill="none" stroke="#252423" stroke-width="1"><path d="M.5 0v13.5H14"/><rect x="2" y="1" width="3" height="12" fill="#4a9ae8"/><path d="M6 13V6h2v7M9.5 13V4.5h2V13"/></svg>
<svg style="left:813.8px;top:175.0px" width="14" height="14" viewBox="0 0 14 14" fill="none" stroke="#252423" stroke-width="1"><path d="M.5 0v13.5H14"/><path d="M2 1.5h10v2.5H2zM2 5.5h8v2.5H2zM2 9.5h9v2.5H2z"/><rect x="2" y="1.5" width="7" height="2.5" fill="#4a9ae8" stroke="none"/></svg>
<svg style="left:835.9px;top:175.0px" width="14" height="14" viewBox="0 0 14 14" fill="none" stroke="#252423" stroke-width="1"><path d="M.5 0v13.5H14"/><path d="M2.5 13V2h3v11M7.5 13V2h3v11"/><rect x="3" y="4" width="2" height="9" fill="#4a9ae8" stroke="none"/></svg>
<svg style="left:726.3px;top:196.2px" width="14" height="14" viewBox="0 0 14 14" fill="none" stroke="#252423" stroke-width="1"><path d="M.5 0v13.5H14"/><path d="M1 9l3-4 3 3 3-5 3 3" stroke="#4a9ae8"/><path d="M1 6l3 3 3-5 3 4 3-5"/></svg>
<svg style="left:748.4px;top:196.2px" width="14" height="14" viewBox="0 0 14 14" fill="none" stroke="#252423" stroke-width="1"><path d="M.5 0v13.5H14"/><path d="M1 13l4-10 3 5 2-3 3 8z" fill="#9dc6f0"/></svg>
<svg style="left:770.1px;top:196.2px" width="14" height="14" viewBox="0 0 14 14" fill="none" stroke="#252423" stroke-width="1"><path d="M.5 0v13.5H14"/><path d="M1 3l4 5 4-4 4 4v5H1z" fill="#9dc6f0" stroke="none"/><path d="M1 3l4 5 4-4 4 4"/></svg>
<svg style="left:792.2px;top:196.2px" width="14" height="14" viewBox="0 0 14 14" fill="none" stroke="#252423" stroke-width="1"><path d="M.5 0v13.5H14"/><path d="M1 1h12v6l-4-2-4 4-4-3z" fill="#4a9ae8"/></svg>
<svg style="left:813.8px;top:196.2px" width="14" height="14" viewBox="0 0 14 14" fill="none" stroke="#252423" stroke-width="1"><path d="M.5 0v13.5H14"/><rect x="2" y="4" width="3" height="9" fill="#4a9ae8"/><path d="M7 13V6h2v7M2 7l4 3 3-5 3 2"/></svg>
<svg style="left:835.9px;top:196.2px" width="14" height="14" viewBox="0 0 14 14" fill="none" stroke="#252423" stroke-width="1"><path d="M.5 0v13.5H14"/><path d="M2.5 13V8h2v5M6 13V3h3v10M10 13V6h2v7"/><rect x="2.5" y="8" width="2" height="5" fill="#4a9ae8" stroke="none"/><path d="M1 9l4-4 4 5 4-4"/></svg>
<svg style="left:726.3px;top:217.5px" width="14" height="14" viewBox="0 0 14 14" fill="none" stroke="#252423" stroke-width="1"><path d="M.5 0v13.5H14"/><path d="M1 1c2 6 4 6 6 3s4-3 6 0v9H1z" fill="#4a9ae8"/><path d="M1 9c3 3 9 3 12 0v4H1z" fill="#f2a33a" stroke="none"/></svg>
<svg style="left:748.4px;top:217.5px" width="14" height="14" viewBox="0 0 14 14" fill="none" stroke="#252423" stroke-width="1"><path d="M.5 0v13.5H14"/><path d="M2.5 13V5h2v8M6 13V8h2v5M9.5 13V1.5h2V13M4.5 5h1.5v3M8 8h1.5"/></svg>
<svg style="left:770.1px;top:217.5px" width="14" height="14" viewBox="0 0 14 14" fill="none" stroke="#252423" stroke-width="1"><path d="M1 1h12v3H1zM3 5h8v3H3zM5 9h4v4H5z" fill="#4a9ae8"/></svg>
<svg style="left:792.2px;top:217.5px" width="14" height="14" viewBox="0 0 14 14" fill="none" stroke="#252423" stroke-width="1"><path d="M.5 0v13.5H14"/><circle cx="3.5" cy="10" r=".9" fill="#252423"/><circle cx="6" cy="6" r=".9" fill="#4a9ae8"/><circle cx="9" cy="9" r=".9" fill="#4a9ae8"/><circle cx="11" cy="3" r=".9" fill="#252423"/><circle cx="3.5" cy="4" r=".9" fill="#252423"/></svg>
<svg style="left:813.8px;top:217.5px" width="14" height="14" viewBox="0 0 14 14" fill="none" stroke="#252423" stroke-width="1"><circle cx="7" cy="7" r="6.2"/><path d="M7 .8V7l4.4 4.4A6.2 6.2 0 0 0 7 .8z" fill="#9dc6f0"/></svg>
<svg style="left:835.9px;top:217.5px" width="14" height="14" viewBox="0 0 14 14" fill="none" stroke="#252423" stroke-width="1"><circle cx="7" cy="7" r="6" stroke="#4a9ae8" stroke-width="2"/><circle cx="7" cy="7" r="3" stroke="#252423"/></svg>
<svg style="left:726.3px;top:238.7px" width="14" height="14" viewBox="0 0 14 14" fill="none" stroke="#252423" stroke-width="1"><rect x=".5" y=".5" width="13" height="13"/><rect x="1" y="1" width="6" height="12" fill="#4a9ae8" stroke="none"/><path d="M7 .5v13M.5 7h13M7 4h6.5M7 10h6.5"/></svg>
<svg style="left:748.4px;top:238.7px" width="14" height="14" viewBox="0 0 14 14" fill="none" stroke="#252423" stroke-width="1"><circle cx="7" cy="6" r="5"/><path d="M5 3l3 2-2 2 3 2" stroke="#1c8a3c" stroke-width="1.5"/><path d="M7 11v2M4 13.5h6"/></svg>
<svg style="left:770.1px;top:238.7px" width="14" height="14" viewBox="0 0 14 14" fill="none" stroke="#252423" stroke-width="1"><path d="M1 2l4-1 2 2 4-1 2 4-1 3-3 4-4-1-3 1 1-4z" fill="#4a9ae8"/><path d="M4 7l5 0" stroke="#fff"/></svg>
<svg style="left:792.2px;top:238.7px" width="14" height="14" viewBox="0 0 14 14" fill="none" stroke="#252423" stroke-width="1"><path d="M7 .5L12.5 13 7 10 1.5 13z" fill="#2d87d8" stroke="none"/></svg>
<svg style="left:813.8px;top:238.7px" width="14" height="14" viewBox="0 0 14 14" fill="none" stroke="#252423" stroke-width="1"><path d="M1 11a6 6 0 0 1 12 0l-2 0a4 4 0 0 0-8 0z" stroke-width="1.2"/><path d="M7 10l3-4" stroke-width="1.3"/></svg>
<svg style="left:835.9px;top:238.7px" width="14" height="14" viewBox="0 0 14 14" fill="none" stroke="#252423" stroke-width="1"><rect x=".5" y="2" width="13" height="10"/><text x="7" y="10" font-size="6" font-family="Liberation Sans" text-anchor="middle" fill="#2d87d8" stroke="none">123</text></svg>
<svg style="left:726.3px;top:261.3px" width="14" height="14" viewBox="0 0 14 14" fill="none" stroke="#252423" stroke-width="1"><rect x=".5" y=".5" width="13" height="13" rx="1"/><path d="M3 3.5h1M3 6h1M3 8.5h1M5 3.5h6M5 6h5M5 8.5h6" stroke="#2d87d8"/></svg>
<svg style="left:748.4px;top:261.3px" width="14" height="14" viewBox="0 0 14 14" fill="none" stroke="#252423" stroke-width="1"><rect x=".5" y="2" width="13" height="9"/><path d="M3 7l1.5-2.5L6 7z" fill="#1c8a3c" stroke="none"/><path d="M7.5 4.5h3L9 7z" fill="#d13438" stroke="none"/><path d="M2 9.5h10"/></svg>
<svg style="left:770.1px;top:261.3px" width="14" height="14" viewBox="0 0 14 14" fill="none" stroke="#252423" stroke-width="1"><rect x=".5" y=".5" width="12" height="12"/><path d="M.5 3.5h12M3 6h2M3 9h2"/><path d="M7 7h6l-2.5 3v3h-1v-3z" fill="#f3f2f1"/></svg>
<svg style="left:792.2px;top:261.3px" width="14" height="14" viewBox="0 0 14 14" fill="none" stroke="#252423" stroke-width="1"><rect x=".5" y=".5" width="13" height="13"/><path d="M.5 4h13M.5 7.5h13M.5 11h13M5 .5v13M9 .5v13"/></svg>
<svg style="left:813.8px;top:261.3px" width="14" height="14" viewBox="0 0 14 14" fill="none" stroke="#252423" stroke-width="1"><rect x=".5" y=".5" width="13" height="13"/><rect x="5" y="4" width="8.5" height="9.5" fill="#4a9ae8" stroke="none"/><path d="M.5 4h13M.5 7.5h13M.5 11h13M5 .5v13M9 .5v13" stroke="#fff"/><path d="M.5 4h4.5M5 .5v3.5"/></svg>
<div class="abs" style="left:837.5px;top:261.5px;font-size:13px;line-height:13px;font-weight:bold;color:#2d6db5">R</div>
<div class="abs" style="left:724.5px;top:283px;font-size:14px;line-height:14px;font-weight:bold;color:#2d6db5;letter-spacing:-0.5px">Py</div>
<svg style="left:748.4px;top:283.0px" width="14" height="14" viewBox="0 0 14 14" fill="none" stroke="#252423" stroke-width="1"><path d="M.5 1v12.5H14M2.5 3.5h7M2.5 6.5h6M2.5 9.5h4"/><circle cx="11" cy="3.5" r="1.2" fill="#4a9ae8" stroke="#4a9ae8"/></svg>
<svg style="left:770.1px;top:283.0px" width="14" height="14" viewBox="0 0 14 14" fill="none" stroke="#252423" stroke-width="1"><path d="M1 6h4M5 7h2M7 2v10M7 2h2M7 7h2M7 12h2" stroke="#4a9ae8"/><rect x="9" y="0.5" width="4" height="3" fill="#4a9ae8" stroke="none"/><rect x="9" y="5.5" width="4" height="3" fill="#4a9ae8" stroke="none"/><rect x="9" y="10.5" width="4" height="3" fill="#4a9ae8" stroke="none"/><rect x="1" y="5" width="4" height="2.5" fill="#4a9ae8" stroke="none"/></svg>
<svg style="left:792.2px;top:283.0px" width="14" height="14" viewBox="0 0 14 14" fill="none" stroke="#252423" stroke-width="1"><path d="M.5 1.5h13v9H5l-2.5 2.5v-2.5H.5z" stroke="#2d6db5"/></svg>
<svg style="left:813.8px;top:283.0px" width="14" height="14" viewBox="0 0 14 14" fill="none" stroke="#252423" stroke-width="1"><path d="M2 .5h6.5l3.5 3.5v9.5H2z"/><path d="M3.5 5h2M5 8h4" stroke="#4a9ae8"/></svg>
<svg style="left:835.9px;top:283.0px" width="14" height="14" viewBox="0 0 14 14" fill="none" stroke="#252423" stroke-width="1"><path d="M3.5 1h7v5a3.5 3.5 0 0 1-7 0zM3.5 2.5H1v1a2.5 2.5 0 0 0 2.5 2.5M10.5 2.5H13v1a2.5 2.5 0 0 1-2.5 2.5M7 9.5V11M4 12.5h6" stroke-width="1.3"/><rect x="4" y="12" width="6" height="1.8" fill="#4a9ae8" stroke="none"/></svg>
<svg style="left:726.3px;top:304.7px" width="14" height="14" viewBox="0 0 14 14" fill="none" stroke="#252423" stroke-width="1"><path d="M2 .5h6.5l3.5 3.5v9.5H2z"/><path d="M4.5 12V9M7 12V7M9.5 12V10" stroke-width="1.3"/></svg>
<svg style="left:748.4px;top:304.7px" width="14" height="14" viewBox="0 0 14 14" fill="none" stroke="#252423" stroke-width="1"><rect x="1.5" y="3.5" width="12" height="9"/><path d="M4 .5L1 6h2.5L2 10l4-5.5H3.5L5 .5z" fill="#f2a33a" stroke="#c97a12" stroke-width=".5"/><text x="8.5" y="11" font-size="5.5" font-family="Liberation Sans" text-anchor="middle" fill="#2d87d8" stroke="none">23</text></svg>
<svg style="left:770.1px;top:304.7px" width="14" height="14" viewBox="0 0 14 14" fill="none" stroke="#252423" stroke-width="1"><rect x="6" y="1.5" width="6" height="5" stroke="#a19f9d"/><rect x="1" y="7.5" width="5" height="5" stroke="#a19f9d"/><path d="M4 .5L1 6h2.5L2 10l4-5.5H3.5L5 .5z" fill="#f2a33a" stroke="#c97a12" stroke-width=".5"/><path d="M6 8h7l-2.5 3v3h-1.5v-3z" fill="#f3f2f1"/></svg>
<div class="abs" style="left:794.0px;top:311px;width:1.8px;height:1.8px;border-radius:50%;background:#252423"></div>
<div class="abs" style="left:798.5px;top:311px;width:1.8px;height:1.8px;border-radius:50%;background:#252423"></div>
<div class="abs" style="left:803.0px;top:311px;width:1.8px;height:1.8px;border-radius:50%;background:#252423"></div>
<div class="abs" style="left:864.99px;top:95.73px;font-size:12.01px;line-height:12.01px;font-weight:bold;color:#252423;white-space:nowrap;transform:scaleX(1.0338);transform-origin:0 0;">Data</div>
<svg style="left:983px;top:97px" width="10" height="9" viewBox="0 0 10 9" fill="none" stroke="#252423" stroke-width="1.2"><path d="M1 .5l4 4-4 4M5 .5l4 4-4 4"/></svg>
<div class="abs" style="left:863px;top:121.5px;width:133.7px;height:17.5px;background:#fff;border:1px solid #d1d1d1;border-bottom-color:#8a8886;border-radius:3px"></div>
<svg style="left:872px;top:125px" width="11" height="11" viewBox="0 0 11 11" fill="none" stroke="#3b3a39" stroke-width="1.1"><circle cx="4.5" cy="4.5" r="3.7"/><path d="M7.2 7.2l3.3 3.3"/></svg>
<div class="abs" style="left:888.83px;top:125.62px;font-size:9.78px;line-height:9.78px;color:#605e5c;white-space:nowrap;transform:scaleX(1.0614);transform-origin:0 0;-webkit-text-stroke:0.20px #605e5c;">Search</div>
<svg style="left:871.5px;top:151.5px" width="6" height="9" viewBox="0 0 6 9" fill="none" stroke="#3b3a39" stroke-width="1.1"><path d="M1 .5l4 4-4 4"/></svg>
<svg style="left:881.5px;top:150.5px" width="11" height="11" viewBox="0 0 11 11" fill="none" stroke="#252423" stroke-width="1"><rect x=".5" y=".5" width="9.5" height="9.5" rx="1.5"/><path d="M.5 3.5h9.5M.5 7h9.5M3.8 .5v9.5M6.8 .5v9.5"/></svg>
<div class="abs" style="left:896.20px;top:152.02px;font-size:9.78px;line-height:9.78px;color:#252423;white-space:nowrap;transform:scaleX(0.8868);transform-origin:0 0;-webkit-text-stroke:0.10px #252423;">ALL_measures</div>
<svg style="left:871.5px;top:170.2px" width="6" height="9" viewBox="0 0 6 9" fill="none" stroke="#3b3a39" stroke-width="1.1"><path d="M1 .5l4 4-4 4"/></svg>
<svg style="left:881.5px;top:169.2px" width="11" height="11" viewBox="0 0 11 11" fill="none" stroke="#252423" stroke-width="1"><rect x=".5" y=".5" width="8" height="8"/><path d="M.5 3h8M3 .5v8M5.5 .5v8"/><rect x="5" y="5" width="5.5" height="5.5" fill="#252423" stroke="none"/><path d="M6 7.5h3.5M7.7 6v3" stroke="#fff" stroke-width=".8"/></svg>
<div class="abs" style="left:895.82px;top:170.74px;font-size:9.78px;line-height:9.78px;color:#252423;white-space:nowrap;transform:scaleX(0.9660);transform-origin:0 0;-webkit-text-stroke:0.10px #252423;">calender</div>
<svg style="left:871.5px;top:188.9px" width="6" height="9" viewBox="0 0 6 9" fill="none" stroke="#3b3a39" stroke-width="1.1"><path d="M1 .5l4 4-4 4"/></svg>
<svg style="left:881.5px;top:187.9px" width="11" height="11" viewBox="0 0 11 11" fill="none" stroke="#252423" stroke-width="1"><rect x=".5" y=".5" width="9.5" height="9.5" rx="1.5"/><path d="M.5 3.5h9.5M.5 7h9.5M3.8 .5v9.5M6.8 .5v9.5"/></svg>
<div class="abs" style="left:895.46px;top:189.46px;font-size:9.78px;line-height:9.78px;color:#252423;white-space:nowrap;transform:scaleX(0.9479);transform-origin:0 0;-webkit-text-stroke:0.10px #252423;">EducationLevel</div>
<svg style="left:871.5px;top:207.7px" width="6" height="9" viewBox="0 0 6 9" fill="none" stroke="#3b3a39" stroke-width="1.1"><path d="M1 .5l4 4-4 4"/></svg>
<svg style="left:881.5px;top:206.7px" width="11" height="11" viewBox="0 0 11 11" fill="none" stroke="#252423" stroke-width="1"><rect x=".5" y=".5" width="9.5" height="9.5" rx="1.5"/><path d="M.5 3.5h9.5M.5 7h9.5M3.8 .5v9.5M6.8 .5v9.5"/></svg>
<div class="abs" style="left:895.45px;top:208.18px;font-size:9.78px;line-height:9.78px;color:#252423;white-space:nowrap;transform:scaleX(0.9589);transform-origin:0 0;-webkit-text-stroke:0.10px #252423;">Employee</div>
<svg style="left:871.5px;top:226.4px" width="6" height="9" viewBox="0 0 6 9" fill="none" stroke="#3b3a39" stroke-width="1.1"><path d="M1 .5l4 4-4 4"/></svg>
<svg style="left:881.5px;top:225.4px" width="11" height="11" viewBox="0 0 11 11" fill="none" stroke="#252423" stroke-width="1"><rect x=".5" y=".5" width="9.5" height="9.5" rx="1.5"/><path d="M.5 3.5h9.5M.5 7h9.5M3.8 .5v9.5M6.8 .5v9.5"/></svg>
<div class="abs" style="left:895.46px;top:226.90px;font-size:9.78px;line-height:9.78px;color:#252423;white-space:nowrap;transform:scaleX(0.9444);transform-origin:0 0;-webkit-text-stroke:0.10px #252423;">PerformanceRating</div>
<svg style="left:871.5px;top:245.1px" width="6" height="9" viewBox="0 0 6 9" fill="none" stroke="#3b3a39" stroke-width="1.1"><path d="M1 .5l4 4-4 4"/></svg>
<svg style="left:881.5px;top:244.1px" width="11" height="11" viewBox="0 0 11 11" fill="none" stroke="#252423" stroke-width="1"><rect x=".5" y=".5" width="9.5" height="9.5" rx="1.5"/><path d="M.5 3.5h9.5M.5 7h9.5M3.8 .5v9.5M6.8 .5v9.5"/></svg>
<div class="abs" style="left:895.46px;top:245.62px;font-size:9.78px;line-height:9.78px;color:#252423;white-space:nowrap;transform:scaleX(0.9521);transform-origin:0 0;-webkit-text-stroke:0.10px #252423;">RatingLevel</div>
<svg style="left:871.5px;top:263.8px" width="6" height="9" viewBox="0 0 6 9" fill="none" stroke="#3b3a39" stroke-width="1.1"><path d="M1 .5l4 4-4 4"/></svg>
<svg style="left:881.5px;top:262.8px" width="11" height="11" viewBox="0 0 11 11" fill="none" stroke="#252423" stroke-width="1"><rect x=".5" y=".5" width="9.5" height="9.5" rx="1.5"/><path d="M.5 3.5h9.5M.5 7h9.5M3.8 .5v9.5M6.8 .5v9.5"/></svg>
<div class="abs" style="left:895.79px;top:264.34px;font-size:9.78px;line-height:9.78px;color:#252423;white-space:nowrap;transform:scaleX(0.9350);transform-origin:0 0;-webkit-text-stroke:0.10px #252423;">SatisfiedLevel</div>
<div class="abs" style="left:32px;top:484px;width:685px;height:27px;background:#f3f2f1"></div>
<svg style="left:40.5px;top:490px" width="17" height="12" viewBox="0 0 17 12" fill="none" stroke="#3b3a39" stroke-width="1.1"><rect x=".5" y=".5" width="16" height="8.5" rx="1"/><path d="M8.5 9v2.5M5.5 11.5h6"/></svg>
<div class="abs" style="left:40px;top:506px;width:18px;height:1.6px;background:#117865"></div>
<svg style="left:78px;top:487px" width="11" height="16" viewBox="0 0 11 16" fill="none" stroke="#3b3a39" stroke-width="1.1"><rect x=".5" y=".5" width="10" height="15" rx="1.5"/><circle cx="5.5" cy="12.5" r=".6" fill="#3b3a39"/></svg>
<svg style="left:106px;top:492px" width="4" height="6" viewBox="0 0 4 6" fill="#c8c6c4"><path d="M3.5 0v6L0 3z"/></svg>
<svg style="left:123px;top:492px" width="4" height="6" viewBox="0 0 4 6" fill="#c8c6c4"><path d="M.5 0v6L4 3z"/></svg>
<div class="abs" style="left:131.5px;top:483.7px;width:411.5px;height:27.5px;background:#fff"></div>
<div class="abs" style="left:131.2px;top:483.7px;width:1.2px;height:27.5px;background:#8a8886"></div>
<div class="abs" style="left:188.5px;top:483.7px;width:1px;height:27.5px;background:#d1d1d1"></div>
<div class="abs" style="left:248.8px;top:483.7px;width:1px;height:27.5px;background:#d1d1d1"></div>
<div class="abs" style="left:358.6px;top:483.7px;width:1px;height:27.5px;background:#d1d1d1"></div>
<div class="abs" style="left:423.8px;top:483.7px;width:1px;height:27.5px;background:#d1d1d1"></div>
<div class="abs" style="left:147.22px;top:493.67px;font-size:10.20px;line-height:10.20px;color:#252423;white-space:nowrap;transform:scaleX(0.9577);transform-origin:0 0;-webkit-text-stroke:0.20px #252423;">Home</div>
<div class="abs" style="left:204.80px;top:493.67px;font-size:10.20px;line-height:10.20px;color:#252423;white-space:nowrap;transform:scaleX(0.8600);transform-origin:0 0;-webkit-text-stroke:0.20px #252423;">Page 1</div>
<div class="abs" style="left:264.42px;top:493.67px;font-size:10.20px;line-height:10.20px;color:#252423;white-space:nowrap;transform:scaleX(0.9330);transform-origin:0 0;-webkit-text-stroke:0.20px #252423;">demographic page</div>
<div class="abs" style="left:374.59px;top:493.67px;font-size:10.20px;line-height:10.20px;color:#252423;white-space:nowrap;transform:scaleX(1.0040);transform-origin:0 0;-webkit-text-stroke:0.20px #252423;">attrition</div>
<div class="abs" style="left:439.37px;top:493.67px;font-size:10.20px;line-height:10.20px;color:#252423;white-space:nowrap;transform:scaleX(0.9548);transform-origin:0 0;-webkit-text-stroke:0.40px #252423;">performance tracker</div>
<div class="abs" style="left:424px;top:508px;width:119px;height:2.5px;background:#117865"></div>
<svg style="left:534.5px;top:488.5px" width="5" height="5" viewBox="0 0 5 5" stroke="#252423" stroke-width="1"><path d="M.5 .5l4 4M4.5 .5l-4 4"/></svg>
<div class="abs" style="left:543px;top:484.2px;width:29.5px;height:26.3px;background:#117865"></div>
<svg style="left:552.5px;top:492px" width="10" height="10" viewBox="0 0 10 10" stroke="#fff" stroke-width="2"><path d="M5 0v10M0 5h10"/></svg>
<div class="abs" style="left:2.86px;top:518.02px;font-size:9.78px;line-height:9.78px;color:#252423;white-space:nowrap;transform:scaleX(0.9399);transform-origin:0 0;-webkit-text-stroke:0.05px #252423;">Page 5 of 5</div>
<div class="abs" style="left:835px;top:520.5px;width:3.5px;height:1px;background:#252423"></div>
<div class="abs" style="left:842px;top:520.5px;width:78px;height:1px;background:#8a8886"></div>
<div class="abs" style="left:866px;top:517px;width:3px;height:7px;background:#3b3a39"></div>
<div class="abs" style="left:881px;top:519px;width:1px;height:4px;background:#8a8886"></div>
<svg style="left:924.5px;top:517px" width="7" height="7" viewBox="0 0 7 7" stroke="#252423" stroke-width="1"><path d="M3.5 0v7M0 3.5h7"/></svg>
<div class="abs" style="left:939.53px;top:518.02px;font-size:9.78px;line-height:9.78px;color:#252423;white-space:nowrap;transform:scaleX(0.9614);transform-origin:0 0;">69%</div>
<svg style="left:973px;top:516.5px" width="14" height="10" viewBox="0 0 14 10" fill="none" stroke="#252423" stroke-width="1"><rect x="1.5" y="1.5" width="11" height="7"/><path d="M.5 3V.5H3M11 .5h2.5V3M13.5 7v2.5H11M3 9.5H.5V7"/></svg>
</body></html>
